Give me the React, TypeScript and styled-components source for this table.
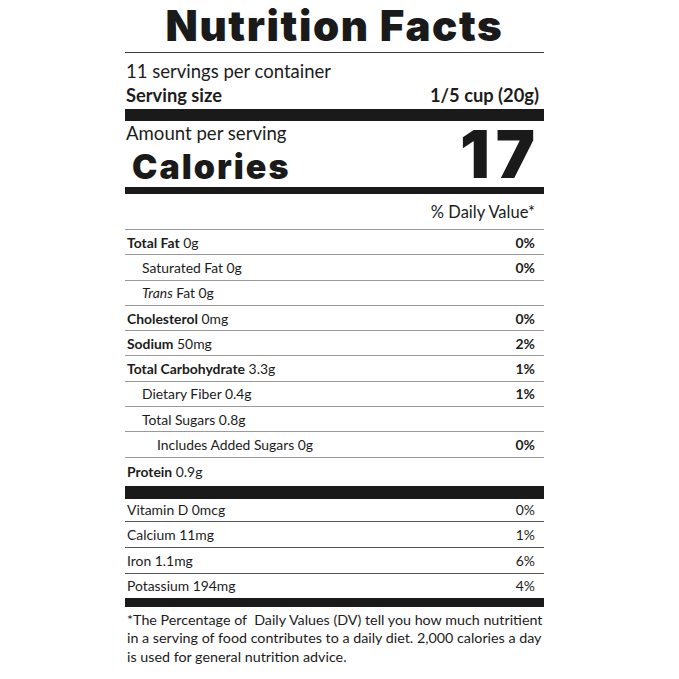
import React from "react";
import styled, { createGlobalStyle } from "styled-components";

const Global = createGlobalStyle`
  html, body { margin: 0; padding: 0; background: #fff; }
  body { font-family: Lato, "Open Sans", sans-serif; color: #1c1c1c; }
`;

const Label = styled.div`
  width: 419px;
  margin-left: 125px;
  display: flex;
  flex-direction: column;
`;

const Title = styled.h1`
  margin: 0;
  height: 52px;
  line-height: 52px;
  text-align: center;
  font-family: Inter, "Liberation Sans", sans-serif;
  font-weight: 900;
  font-size: 42px;
  letter-spacing: 1.6px;
  color: #1a1a1a;
  border-bottom: 1px solid #3a3a3a;
`;

const Servings = styled.div`
  height: 28px;
  display: flex;
  align-items: flex-end;
  padding-left: 1px;
  font-size: 18.5px;
  line-height: 20px;
`;

const ServingSize = styled.div`
  height: 28px;
  display: flex;
  align-items: center;
  justify-content: space-between;
  padding: 0 5px 0 1px;
  font-size: 18.3px;
  font-weight: 700;
`;

const Bar = styled.div<{ $h: number }>`
  height: ${(p) => p.$h}px;
  background: #1a1a1a;
`;

const CalBlock = styled.div`
  height: 66px;
  display: flex;
  justify-content: space-between;
  align-items: stretch;
`;

const CalLeft = styled.div`
  display: flex;
  flex-direction: column;
  padding-left: 1px;
`;

const Amount = styled.div`
  font-size: 18.6px;
  line-height: 24px;
`;

const Calories = styled.div`
  font-family: Inter, "Liberation Sans", sans-serif;
  font-weight: 900;
  font-size: 34px;
  line-height: 40px;
  letter-spacing: 2px;
  margin: 2px 0 0 6px;
  color: #1a1a1a;
`;

const CalNum = styled.div`
  font-family: Inter, "Liberation Sans", sans-serif;
  font-weight: 900;
  font-size: 66px;
  line-height: 66px;
  letter-spacing: 6px;
  padding-right: 3px;
  color: #1a1a1a;
`;

const DvHead = styled.div`
  height: 36px;
  display: flex;
  align-items: center;
  justify-content: flex-end;
  padding-right: 9px;
  font-size: 16.5px;
  border-bottom: 1.5px solid #9a9a9a;
  box-sizing: border-box;
`;

const Row = styled.div<{ $h?: number; $indent?: number; $line?: string }>`
  height: ${(p) => p.$h ?? 25.3}px;
  box-sizing: border-box;
  display: flex;
  align-items: center;
  justify-content: space-between;
  padding: 0 9px 0 ${(p) => 2 + (p.$indent ?? 0)}px;
  font-size: 13.9px;
  border-bottom: ${(p) => (p.$line ? `1.5px solid ${p.$line}` : "none")};
`;

const Pct = styled.span<{ $bold?: boolean }>`
  font-weight: ${(p) => (p.$bold ? 700 : 400)};
`;

const B = styled.b`
  font-weight: 700;
`;

const Note = styled.p`
  margin: 0;
  padding: 4px 0 0 2px;
  font-size: 14.3px;
  line-height: 18.5px;
  white-space: nowrap;
`;

type Nut = { name: React.ReactNode; pct?: string; indent?: number };

const upper: Nut[] = [
  { name: <><B>Total Fat</B> 0g</>, pct: "0%" },
  { name: "Saturated Fat 0g", pct: "0%", indent: 15 },
  { name: <><i>Trans</i> Fat 0g</>, indent: 15 },
  { name: <><B>Cholesterol</B> 0mg</>, pct: "0%" },
  { name: <><B>Sodium</B> 50mg</>, pct: "2%" },
  { name: <><B>Total Carbohydrate</B> 3.3g</>, pct: "1%" },
  { name: "Dietary Fiber 0.4g", pct: "1%", indent: 15 },
  { name: "Total Sugars 0.8g", indent: 15 },
  { name: "Includes Added Sugars 0g", pct: "0%", indent: 30 },
];

const lower = [
  { name: "Vitamin D 0mcg", pct: "0%", h: 23 },
  { name: "Calcium 11mg", pct: "1%", h: 26 },
  { name: "Iron 1.1mg", pct: "6%", h: 26 },
  { name: "Potassium 194mg", pct: "4%", h: 24 },
];

export default function App() {
  return (
    <>
      <Global />
      <Label>
        <Title>Nutrition Facts</Title>
        <Servings>11 servings per container</Servings>
        <ServingSize>
          <span>Serving size</span>
          <span>1/5 cup (20g)</span>
        </ServingSize>
        <Bar $h={12} />
        <CalBlock>
          <CalLeft>
            <Amount>Amount per serving</Amount>
            <Calories>Calories</Calories>
          </CalLeft>
          <CalNum>17</CalNum>
        </CalBlock>
        <Bar $h={7} />
        <DvHead>% Daily Value*</DvHead>
        {upper.map((n, i) => (
          <Row key={i} $indent={n.indent} $line="#9a9a9a">
            <span>{n.name}</span>
            {n.pct && <Pct $bold>{n.pct}</Pct>}
          </Row>
        ))}
        <Row $h={28}>
          <span>
            <B>Protein</B> 0.9g
          </span>
        </Row>
        <Bar $h={13} />
        {lower.map((n, i) => (
          <Row key={i} $h={n.h} $line={i < lower.length - 1 ? "#555" : undefined}>
            <span>{n.name}</span>
            <Pct>{n.pct}</Pct>
          </Row>
        ))}
        <Bar $h={9} />
        <Note>
          *The Percentage of&nbsp; Daily Values (DV) tell you how much nutritient
          <br />
          in a serving of food contributes to a daily diet. 2,000 calories a day
          <br />
          is used for general nutrition advice.
        </Note>
      </Label>
    </>
  );
}
